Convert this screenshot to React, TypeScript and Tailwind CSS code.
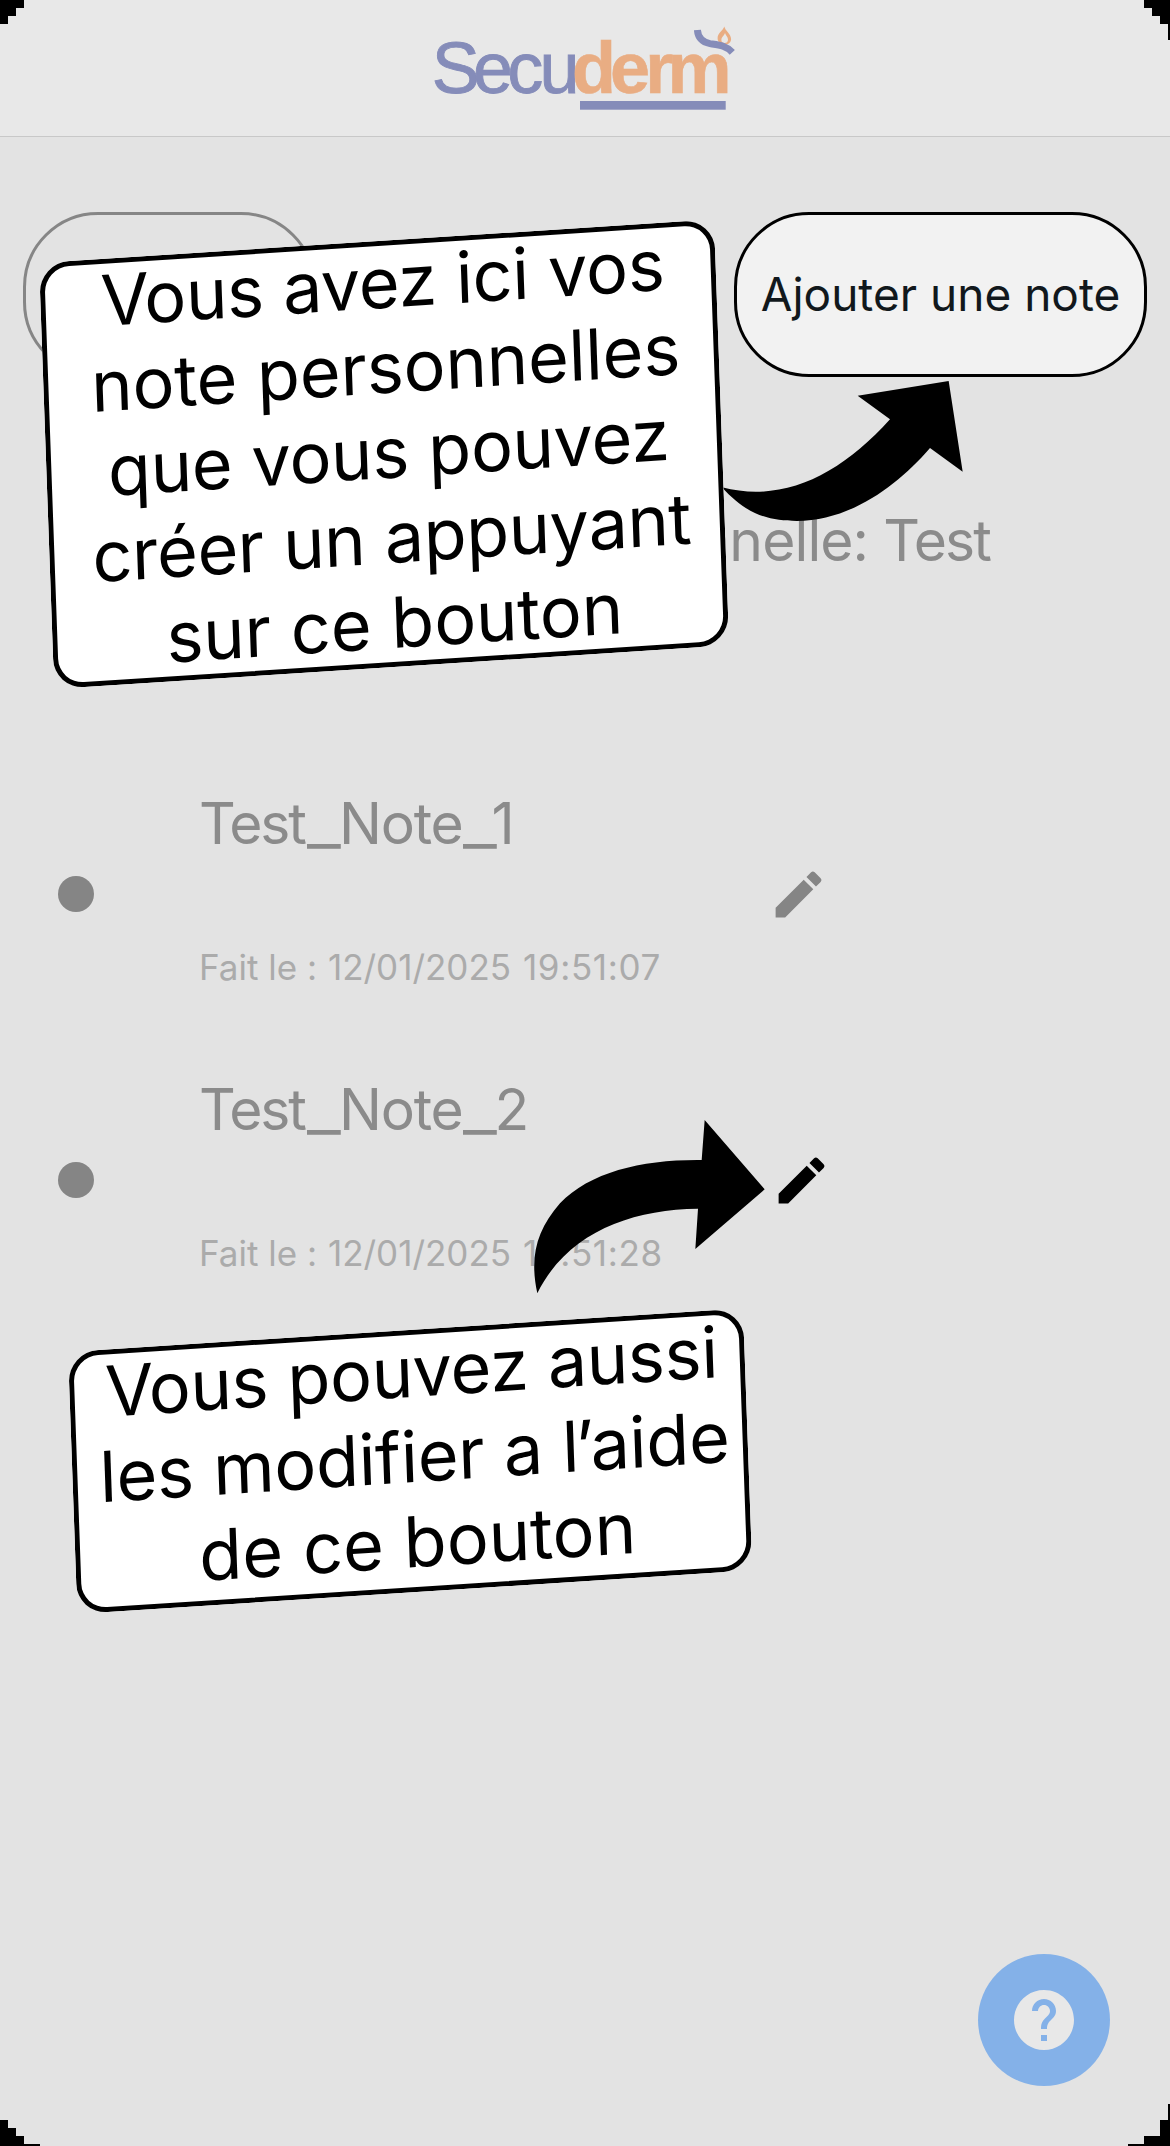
import type { ReactNode } from "react";
import { MdEdit, MdHelp } from "react-icons/md";

const notes = [
  { index: "1", day: "12/01/2025", time: "19:51:07", active: false },
  { index: "2", day: "12/01/2025", time: "19:51:28", active: true },
];

function Logo() {
  return (
    <svg className="h-[136px] w-[330px]" viewBox="420 0 330 136" fontFamily="'Liberation Sans', Arial, sans-serif" fontSize="72">
      <text x="431.7 473 507.2 539.4" y="93" fill="#858cb9" stroke="#858cb9" strokeWidth="0.9">Secu</text>
      <text x="572 610 645.3 667.6" y="93" fill="#e9ad83" stroke="#e9ad83" strokeWidth="0.6" fontWeight="700">derm</text>
      <rect x="580" y="101" width="145.7" height="8.7" fill="#858cb9" />
      <path
        fillRule="evenodd"
        fill="#e9ad83"
        d="M724.3 26.5c1 4.5 6.8 7.500 6.800 12.500c0 3.500-2.500 5.500-6.600 5.500c-4.200 0-6.900-2.500-6.900-6.500c0-5 5.200-7 6.700-11.500zM725 33c-1 3-3.600 4-3.600 7c0 2 1.200 3 3 3c2.300 0 3.600-1.300 3.600-3.600c0-2.600-2.300-3.800-3-6.400z"
      />
      <path d="M697.400 30C698 37.500 702 42 710 43.600C719 45 726 45.500 732.300 52.300" fill="none" stroke="#858cb9" strokeWidth="7" />
    </svg>
  );
}

function Callout({ children, className }: { children: ReactNode; className: string }) {
  return (
    <div
      className={`absolute w-[675px] origin-top-left rounded-[30px] bg-white pl-[9px] text-center text-[70px] leading-[85px] whitespace-nowrap text-black shadow-[inset_0_0_0_5px_#000] [transform:matrix(1,-0.0647,0.0356,1,0,0)] ${className}`}
    >
      <div className="-translate-y-px">{children}</div>
    </div>
  );
}

function Underscore() {
  return <span className="inline-block w-8 origin-left scale-x-130 tracking-normal">_</span>;
}

function Corners() {
  return (
    <svg className="pointer-events-none absolute inset-0 h-[2146px] w-[1170px]" viewBox="0 0 1170 2146" shapeRendering="crispEdges">
      <path d="M0 0H24V8H16V16H8V24H0ZM1170 0H1144V8H1152V16H1160V24H1168V40H1170ZM0 2146H40V2144H24V2136H16V2128H8V2120H0ZM1170 2146H1128V2144H1144V2136H1160V2120H1168V2104H1170Z" />
    </svg>
  );
}

export default function App() {
  return (
    <div className="relative flex h-[2146px] w-[1170px] flex-col overflow-hidden bg-[#e3e3e3] font-[Inter,sans-serif]">
      <header className="flex h-[137px] shrink-0 justify-center border-b border-[#c8c8c8] bg-[#e8e8e8]">
        <Logo />
      </header>

      <div className="mt-[75px] flex justify-between px-[23px]">
        <button className="h-[165px] w-[293px] rounded-[75px] border-3 border-[#868686]" />
        <button className="h-[165px] w-[413px] rounded-[75px] border-3 border-black bg-[#f2f2f2] text-[46px] whitespace-nowrap text-[#11181c]">
          Ajouter une note
        </button>
      </div>

      <h1 className="mt-[129px] mr-[180px] text-right text-[57px] leading-[70px] tracking-[-0.9px] text-[#8b8b8b]">
        Note personnelle: <span className="tracking-[-1.9px]">Test</span>
      </h1>

      <ul className="mt-[175px] flex flex-col">
        {notes.map((note) => (
          <li key={note.index} className="flex h-[286px] items-center pl-[58px]">
            <span className="size-9 rounded-full bg-[#858585]" />
            <div className="ml-[105px] flex h-full w-[569px] flex-col gap-[88px] pt-[39px]">
              <div className="text-[57px] leading-[68px] tracking-[-1.2px] whitespace-nowrap text-[#8b8b8b]">
                <span className="mr-[2px] tracking-[-2.1px]">Test</span>
                <Underscore />
                Note
                <Underscore />
                <span className={note.index === "1" ? "-ml-[3px]" : ""}>{note.index}</span>
              </div>
              <div className="text-[35px] leading-[42px] whitespace-nowrap text-[#ababab]">
                Fait le : <span className="ml-px">{note.day}</span>{" "}
                <span className="ml-[2px] tracking-[0.65px]">{note.time}</span>
              </div>
            </div>
            <MdEdit className={note.active ? "ml-[3px] size-[61px] text-black" : "size-[61px] text-[#858585]"} />
          </li>
        ))}
      </ul>

      <svg className="absolute top-[190px] left-[700px] h-[400px] w-[470px]" viewBox="0 0 1410 1200">
        <path d="M66 892C250 940 420 855 570 688L473 617L746 573L788 845L690 774C590 890 450 992 290 993C210 993 140 975 66 892Z" />
      </svg>
      <svg className="absolute top-[1100px] left-[500px] h-[220px] w-[360px]" viewBox="0 0 1080 660">
        <path d="M112 580C88 470 110 390 180 310C270 215 430 178 605 180L614 60L794 268L586 447L594 326C390 328 200 400 112 580Z" />
      </svg>

      <Callout className="top-[263px] left-[39.4px] h-[426px]">
        <div className="tracking-[-0.3px]">
          <span className="tracking-[-5px]">V</span>ous avez ici vos
        </div>
        <div className="tracking-[-0.08px]">note personnelles</div>
        <div className="tracking-[-0.28px]">que vous pouvez</div>
        <div className="tracking-[-0.33px]">créer un appuyant</div>
        <div>sur ce bouton</div>
      </Callout>
      <Callout className="top-[1352.2px] left-[68.1px] h-[262px]">
        <div className="tracking-[-0.3px]">
          <span className="tracking-[-5px]">V</span>ous pouvez aussi
        </div>
        <div className="tracking-[-0.25px]">
          les modifier a <span className="tracking-[-3.5px]">l’</span>aide
        </div>
        <div className="tracking-[0.1px]">de ce bouton</div>
      </Callout>

      <button className="absolute top-[1954px] left-[978px] flex size-[132px] items-center justify-center rounded-full bg-[#84b1e8]">
        <MdHelp className="size-[72px] text-[#e8e8e8]" />
      </button>

      <Corners />
    </div>
  );
}
